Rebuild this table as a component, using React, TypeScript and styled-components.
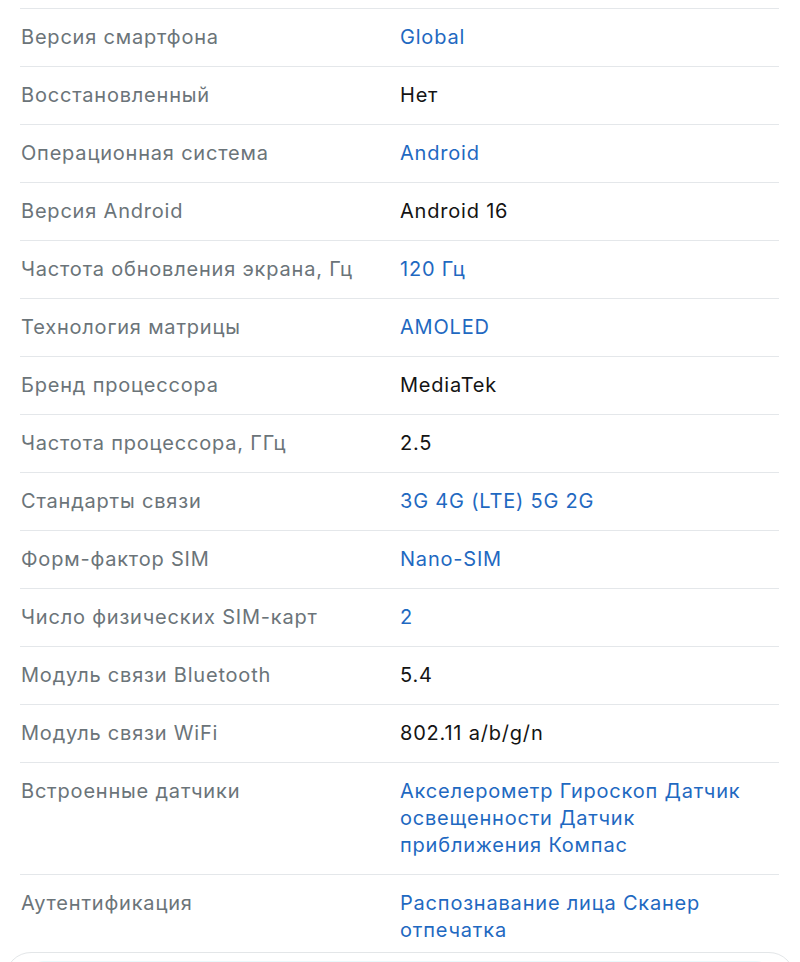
import styled, { createGlobalStyle } from "styled-components";

const GlobalStyle = createGlobalStyle`
  html, body {
    margin: 0;
    padding: 0;
    background: #ffffff;
    overflow: hidden;
  }
  body {
    font-family: Inter, "Noto Sans", sans-serif;
    -webkit-font-smoothing: antialiased;
  }
`;

const Page = styled.div`
  padding-top: 8px;
  width: 800px;
  height: 962px;
  overflow: hidden;
`;

const SpecList = styled.dl`
  margin: 0 21px 0 20px;
  padding: 0;
`;

const SpecRow = styled.div`
  display: grid;
  grid-template-columns: 380px 1fr;
  border-top: 1px solid #e4e7ea;
  padding: 15px 0;
  font-size: 20px;
  line-height: 27px;
  letter-spacing: 0.8px;
  // last row sits partly under the card below
  &:last-child {
    padding-bottom: 8px;
  }
`;

const Label = styled.dt`
  margin: 0;
  padding-left: 1px;
  color: #6b7479;
`;

const Value = styled.dd<{ $link?: boolean }>`
  margin: 0;
  padding-right: 16px;
  color: ${(p) => (p.$link ? "#1f69c1" : "#141414")};
`;

const Card = styled.div`
  margin: 0 5px;
  height: 60px;
  border: 1px solid #e3e6e8;
  border-radius: 26px;
  padding: 8px 24px 0;
`;

const CardInner = styled.div`
  height: 100%;
  background: #e9fafc;
  border-radius: 14px 14px 0 0;
`;

type Spec = { label: string; value: string; link?: boolean };

const specs: Spec[] = [
  { label: "Версия смартфона", value: "Global", link: true },
  { label: "Восстановленный", value: "Нет" },
  { label: "Операционная система", value: "Android", link: true },
  { label: "Версия Android", value: "Android 16" },
  { label: "Частота обновления экрана, Гц", value: "120 Гц", link: true },
  { label: "Технология матрицы", value: "AMOLED", link: true },
  { label: "Бренд процессора", value: "MediaTek" },
  { label: "Частота процессора, ГГц", value: "2.5" },
  { label: "Стандарты связи", value: "3G 4G (LTE) 5G 2G", link: true },
  { label: "Форм-фактор SIM", value: "Nano-SIM", link: true },
  { label: "Число физических SIM-карт", value: "2", link: true },
  { label: "Модуль связи Bluetooth", value: "5.4" },
  { label: "Модуль связи WiFi", value: "802.11 a/b/g/n" },
  {
    label: "Встроенные датчики",
    value: "Акселерометр Гироскоп Датчик освещенности Датчик приближения Компас",
    link: true,
  },
  {
    label: "Аутентификация",
    value: "Распознавание лица Сканер отпечатка",
    link: true,
  },
];

export default function App() {
  return (
    <>
      <GlobalStyle />
      <Page>
        <SpecList>
          {specs.map((s) => (
            <SpecRow key={s.label}>
              <Label>{s.label}</Label>
              <Value $link={s.link}>{s.value}</Value>
            </SpecRow>
          ))}
        </SpecList>
        <Card>
          <CardInner />
        </Card>
      </Page>
    </>
  );
}
